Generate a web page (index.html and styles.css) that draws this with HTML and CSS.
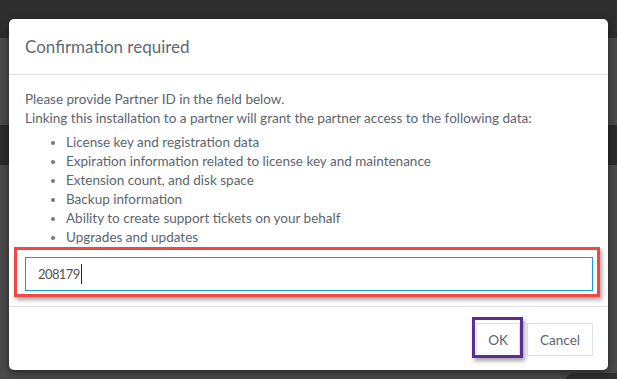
FILE: index.html
```html
<!DOCTYPE html>
<html>
<head>
    <title>Confirmation required</title>
    <link rel="stylesheet" href="styles.css">
</head>
<body>
    <div class="page">
        <div class="topbar"></div>
        <div class="band"></div>
        <div class="fab"></div>
    </div>

    <!-- Modal -->
    <div class="modal">
        <div class="modal-header">
            <h2>Confirmation required</h2>
        </div>
        <div class="modal-body">
            <p>Please provide Partner ID in the field below.<br>
            Linking this installation to a partner will grant the partner access to the following data:</p>
            <ul>
                <li>License key and registration data</li>
                <li>Expiration information related to license key and maintenance</li>
                <li>Extension count, and disk space</li>
                <li>Backup information</li>
                <li>Ability to create support tickets on your behalf</li>
                <li>Upgrades and updates</li>
            </ul>
            <div class="field">
                <div class="text-input">208179<span class="caret"></span></div>
            </div>
        </div>
        <div class="modal-footer">
            <button class="btn btn-ok">OK</button>
            <button class="btn">Cancel</button>
        </div>
    </div>
</body>
</html>
```

FILE: styles.css
```css
body {
    margin: 0;
    font-family: "Lato", "Liberation Sans", sans-serif;
    background-color: #4a4a4a;
}
.page {
    height: 379px;
    position: relative;
    overflow: hidden;
}
.topbar {
    height: 38px;
    background-color: #2e2e2e;
}
.band {
    height: 40px;
    margin-top: 87px;
    background-color: #2b2b2b;
}
.fab {
    position: absolute;
    right: -10px;
    bottom: -12px;
    width: 62px;
    height: 18px;
    border-radius: 9px;
    background-color: #2f2f2f;
}
.modal {
    position: absolute;
    top: 19px;
    left: 9px;
    width: 599px;
    background: white;
    border-radius: 5px;
    box-shadow: 0 3px 9px rgba(0,0,0,0.5);
    color: #5a656f;
}
.modal-header {
    height: 55px;
    padding: 0 16px;
    border-bottom: 1px solid #e3e3e3;
    display: flex;
    align-items: center;
}
.modal-header h2 {
    margin: 0;
    font-size: 17px;
    font-weight: normal;
    color: #5f6a74;
}
.modal-body {
    padding: 15px 15px 15px 16px;
    font-size: 13.5px;
    line-height: 19px;
}
.modal-body p {
    margin: 0;
}
.modal-body ul {
    margin: 5px 0 10px 0;
    padding-left: 41px;
}
.modal-body li::marker {
    color: #777;
    font-size: 12px;
}
.field {
    position: relative;
}
/* annotation box */
.field::after {
    content: "";
    position: absolute;
    left: -11px;
    right: -7px;
    top: -10px;
    bottom: -6px;
    border: 3px solid #f04646;
    box-shadow: 2px 3px 4px rgba(0,0,0,0.35);
}
.text-input {
    height: 32px;
    border: 1px solid #1a9bd7;
    padding: 0 12px;
    display: flex;
    align-items: center;
    font-size: 13px;
    letter-spacing: -0.6px;
    color: #555;
}
.caret {
    display: inline-block;
    width: 1px;
    height: 20px;
    margin-left: 1px;
    background-color: #222;
}
.modal-footer {
    border-top: 1px solid #e3e3e3;
    padding: 16px 15px 14px 15px;
    display: flex;
    justify-content: flex-end;
    gap: 7px;
}
.btn {
    font-family: inherit;
    font-size: 13.5px;
    color: #5a6570;
    background: white;
    border: 1px solid #dde2e6;
    height: 33px;
    padding: 0 12px;
    cursor: pointer;
}
.btn-ok {
    position: relative;
    width: 44px;
    padding: 0;
}
/* annotation box */
.btn-ok::after {
    content: "";
    position: absolute;
    left: -5px;
    right: -4px;
    top: -7px;
    bottom: -3px;
    border: 3px solid #5c2d91;
    box-shadow: 2px 3px 4px rgba(0,0,0,0.35);
}
```
